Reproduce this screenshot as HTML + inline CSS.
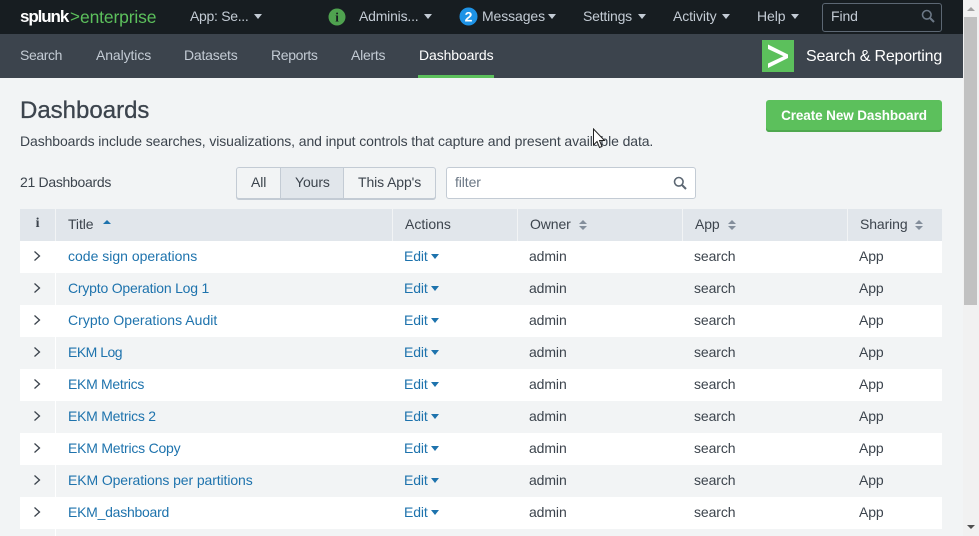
<!DOCTYPE html>
<html><head><meta charset="utf-8"><style>
html,body{margin:0;padding:0;width:979px;height:536px;overflow:hidden;background:#f2f4f5}
body{position:relative;font-family:"Liberation Sans",sans-serif;font-size:14px;color:#3c444d;letter-spacing:-.1px}
.a{position:absolute;white-space:nowrap}
.t{line-height:20px;height:20px}
.n{color:#c3cbd4}
.car{position:absolute;width:0;height:0;border-left:4px solid transparent;border-right:4px solid transparent;border-top:5px solid #c3cbd4}
.row{position:absolute;left:20px;width:922px;height:32px;background:#fff}
.row.g{background:#f2f4f5}
.row.g:before{content:"";position:absolute;left:35px;top:0;width:1px;height:32px;background:#fff}
.row span{position:absolute;top:5px;line-height:20px;white-space:nowrap}
.row .ti{left:48px;color:#1e73ad}
.row .ed{left:384px;color:#1e73ad}
.row .ed:after{content:"";position:absolute;left:27px;top:8px;border-left:4px solid transparent;border-right:4px solid transparent;border-top:5px solid #1e73ad}
.row .ow{left:509px}.row .ap{left:674px}.row .sh{left:839px}
.row svg{position:absolute;left:13px;top:10px}
.th{position:absolute;top:209px;height:32px;background:#e1e6eb;line-height:30px;color:#3c444d}
.sort{position:absolute;top:11px;width:8px;height:10px}
</style></head><body>

<div class="a" style="left:0;top:0;width:963px;height:34px;background:#171d21"></div>
<div class="a" style="left:0;top:34px;width:963px;height:44px;background:#3c444d"></div>

<div class="a" style="left:20px;top:6px;line-height:22px;font-size:17px;font-weight:bold;color:#fff;letter-spacing:-1.1px">splunk</div>
<div class="a" style="left:70px;top:6px;line-height:22px;font-size:17px;color:#5cc05c;letter-spacing:0">&gt;</div>
<div class="a" style="left:80px;top:6px;line-height:22px;font-size:17.5px;color:#5cc05c;letter-spacing:-.15px">enterprise</div>

<div class="a t n" style="left:190px;top:6px;letter-spacing:-.3px">App: Se...</div><div class="car" style="left:254px;top:14px"></div>

<svg class="a" style="left:328px;top:8px" width="18" height="18"><circle cx="9" cy="9" r="8.5" fill="#4fa24f"/><text x="9" y="13.5" text-anchor="middle" font-family="Liberation Serif" font-weight="bold" font-size="13" fill="#171d21">i</text></svg>
<div class="a t n" style="left:359px;top:6px;letter-spacing:-.2px">Adminis...</div><div class="car" style="left:424px;top:14px"></div>

<svg class="a" style="left:459px;top:7px" width="19" height="19"><circle cx="9.5" cy="9.5" r="9" fill="#1e93e6"/><text x="9.5" y="14.5" text-anchor="middle" font-family="Liberation Sans" font-weight="bold" font-size="14" fill="#fff">2</text></svg>
<div class="a t n" style="left:482px;top:6px">Messages</div><div class="car" style="left:548px;top:14px"></div>
<div class="a t n" style="left:583px;top:6px;letter-spacing:-.2px">Settings</div><div class="car" style="left:638px;top:14px"></div>
<div class="a t n" style="left:673px;top:6px">Activity</div><div class="car" style="left:722px;top:14px"></div>
<div class="a t n" style="left:757px;top:6px">Help</div><div class="car" style="left:791px;top:14px"></div>

<div class="a" style="left:822px;top:3px;width:118px;height:27px;border:1px solid #5c6773;border-radius:3px"></div>
<div class="a t n" style="left:831px;top:6px">Find</div>
<svg class="a" style="left:921px;top:9px" width="14" height="14" fill="none" stroke="#6b7785" stroke-width="1.6"><circle cx="5.8" cy="5.8" r="4.3"/><path d="M9 9l4 4" stroke-width="2"/></svg>

<div class="a t n" style="left:20px;top:45px;letter-spacing:-.4px">Search</div>
<div class="a t n" style="left:96px;top:45px">Analytics</div>
<div class="a t n" style="left:184px;top:45px;letter-spacing:-.22px">Datasets</div>
<div class="a t n" style="left:271px;top:45px;letter-spacing:-.35px">Reports</div>
<div class="a t n" style="left:351px;top:45px;letter-spacing:-.25px">Alerts</div>
<div class="a t" style="left:419px;top:45px;color:#fff">Dashboards</div>
<div class="a" style="left:418px;top:75px;width:76px;height:3px;background:#5cc05c"></div>

<div class="a" style="left:762px;top:40px;width:32px;height:32px;background:#5cc05c"></div>
<svg class="a" style="left:762px;top:40px" width="32" height="32"><path d="M6 4.5L26 14.5V18L6 28V23.5L21.5 16.2L6 9Z" fill="#fff"/></svg>
<div class="a" style="left:806px;top:46px;line-height:22px;font-size:16px;color:#fff;letter-spacing:-.2px">Search &amp; Reporting</div>

<div class="a" style="left:20px;top:96px;line-height:30px;font-size:24px;color:#3c444d;font-weight:normal;letter-spacing:0;-webkit-text-stroke:.3px #3c444d">Dashboards</div>
<div class="a t" style="left:20px;top:131px">Dashboards include searches, visualizations, and input controls that capture and present available data.</div>

<div class="a" style="left:766px;top:100px;width:176px;height:32px;background:#5cc05c;border-bottom:0;border-radius:3px;box-shadow:inset 0 -2px 0 #4fa84f;color:#fff;font-weight:bold;text-align:center;line-height:31px;font-size:13.5px">Create New Dashboard</div>

<svg class="a" style="left:592px;top:128px" width="16" height="22"><path d="M1.5 1V17L5 13.5L7.5 19.5L10 18.5L7.5 12.5H12.5Z" fill="#fff" stroke="#222" stroke-width="1"/></svg>

<div class="a t" style="left:20px;top:172px;letter-spacing:-.3px">21 Dashboards</div>

<div class="a" style="left:236px;top:167px;width:198px;height:30px;border:1px solid #c3cbd4;border-radius:3px;background:#f2f4f5;box-shadow:0 1px 0 #c3cbd4"></div>
<div class="a" style="left:280px;top:168px;width:62px;height:30px;background:#e1e6eb;border-left:1px solid #c3cbd4;border-right:1px solid #c3cbd4"></div>
<div class="a t" style="left:251px;top:172px">All</div>
<div class="a t" style="left:295px;top:172px">Yours</div>
<div class="a t" style="left:358px;top:172px">This App's</div>

<div class="a" style="left:446px;top:167px;width:248px;height:30px;border:1px solid #c3cbd4;border-radius:3px;background:#fff"></div>
<div class="a t" style="left:455px;top:172px;color:#6b7785">filter</div>
<svg class="a" style="left:673px;top:176px" width="14" height="14" fill="none" stroke="#5c6773" stroke-width="1.6"><circle cx="5.8" cy="5.8" r="4.3"/><path d="M9 9l4 4" stroke-width="2"/></svg>

<div class="th" style="left:20px;width:35px;text-align:center;font-family:'Liberation Serif';font-weight:bold">i</div>
<div class="th" style="left:56px;width:336px"><span style="position:absolute;left:12px">Title</span><span style="position:absolute;left:47px;top:11px;border-left:4px solid transparent;border-right:4px solid transparent;border-bottom:4px solid #1e73ad"></span></div>
<div class="th" style="left:393px;width:124px"><span style="position:absolute;left:12px;letter-spacing:0">Actions</span></div>
<div class="th" style="left:518px;width:164px"><span style="position:absolute;left:12px">Owner</span><svg class="sort" style="left:61px" viewBox="0 0 8 10"><path d="M4 0L8 4H0ZM4 10L0 6H8Z" fill="#838e9b"/></svg></div>
<div class="th" style="left:683px;width:164px"><span style="position:absolute;left:12px">App</span><svg class="sort" style="left:45px" viewBox="0 0 8 10"><path d="M4 0L8 4H0ZM4 10L0 6H8Z" fill="#838e9b"/></svg></div>
<div class="th" style="left:848px;width:94px"><span style="position:absolute;left:12px">Sharing</span><svg class="sort" style="left:67px" viewBox="0 0 8 10"><path d="M4 0L8 4H0ZM4 10L0 6H8Z" fill="#838e9b"/></svg></div>

<div class="row" style="top:241px"><svg width="8" height="10" fill="none" stroke="#3c444d" stroke-width="1.3"><path d="M1.5 .5L6.5 5L1.5 9.5"/></svg><span class="ti" style="letter-spacing:0">code sign operations</span><span class="ed">Edit</span><span class="ow">admin</span><span class="ap">search</span><span class="sh">App</span></div>
<div class="row g" style="top:273px"><svg width="8" height="10" fill="none" stroke="#3c444d" stroke-width="1.3"><path d="M1.5 .5L6.5 5L1.5 9.5"/></svg><span class="ti" style="letter-spacing:-.2px">Crypto Operation Log 1</span><span class="ed">Edit</span><span class="ow">admin</span><span class="ap">search</span><span class="sh">App</span></div>
<div class="row" style="top:305px"><svg width="8" height="10" fill="none" stroke="#3c444d" stroke-width="1.3"><path d="M1.5 .5L6.5 5L1.5 9.5"/></svg><span class="ti" style="letter-spacing:.03px">Crypto Operations Audit</span><span class="ed">Edit</span><span class="ow">admin</span><span class="ap">search</span><span class="sh">App</span></div>
<div class="row g" style="top:337px"><svg width="8" height="10" fill="none" stroke="#3c444d" stroke-width="1.3"><path d="M1.5 .5L6.5 5L1.5 9.5"/></svg><span class="ti" style="letter-spacing:-.5px">EKM Log</span><span class="ed">Edit</span><span class="ow">admin</span><span class="ap">search</span><span class="sh">App</span></div>
<div class="row" style="top:369px"><svg width="8" height="10" fill="none" stroke="#3c444d" stroke-width="1.3"><path d="M1.5 .5L6.5 5L1.5 9.5"/></svg><span class="ti" style="letter-spacing:-.3px">EKM Metrics</span><span class="ed">Edit</span><span class="ow">admin</span><span class="ap">search</span><span class="sh">App</span></div>
<div class="row g" style="top:401px"><svg width="8" height="10" fill="none" stroke="#3c444d" stroke-width="1.3"><path d="M1.5 .5L6.5 5L1.5 9.5"/></svg><span class="ti" style="letter-spacing:-.25px">EKM Metrics 2</span><span class="ed">Edit</span><span class="ow">admin</span><span class="ap">search</span><span class="sh">App</span></div>
<div class="row" style="top:433px"><svg width="8" height="10" fill="none" stroke="#3c444d" stroke-width="1.3"><path d="M1.5 .5L6.5 5L1.5 9.5"/></svg><span class="ti" style="letter-spacing:-.22px">EKM Metrics Copy</span><span class="ed">Edit</span><span class="ow">admin</span><span class="ap">search</span><span class="sh">App</span></div>
<div class="row g" style="top:465px"><svg width="8" height="10" fill="none" stroke="#3c444d" stroke-width="1.3"><path d="M1.5 .5L6.5 5L1.5 9.5"/></svg><span class="ti">EKM Operations per partitions</span><span class="ed">Edit</span><span class="ow">admin</span><span class="ap">search</span><span class="sh">App</span></div>
<div class="row" style="top:497px"><svg width="8" height="10" fill="none" stroke="#3c444d" stroke-width="1.3"><path d="M1.5 .5L6.5 5L1.5 9.5"/></svg><span class="ti" style="letter-spacing:-.25px">EKM_dashboard</span><span class="ed">Edit</span><span class="ow">admin</span><span class="ap">search</span><span class="sh">App</span></div>
<div class="row g" style="top:529px"></div>

<div class="a" style="left:963px;top:0;width:16px;height:536px;background:#f1f1f1"></div>
<div class="a" style="left:964px;top:17px;width:13px;height:288px;background:#c1c1c1"></div>
<div class="a" style="left:967px;top:7px;border-left:4px solid transparent;border-right:4px solid transparent;border-bottom:4px solid #a3a3a3"></div>
<div class="a" style="left:967px;top:525px;border-left:4px solid transparent;border-right:4px solid transparent;border-top:4px solid #505050"></div>
</body></html>
